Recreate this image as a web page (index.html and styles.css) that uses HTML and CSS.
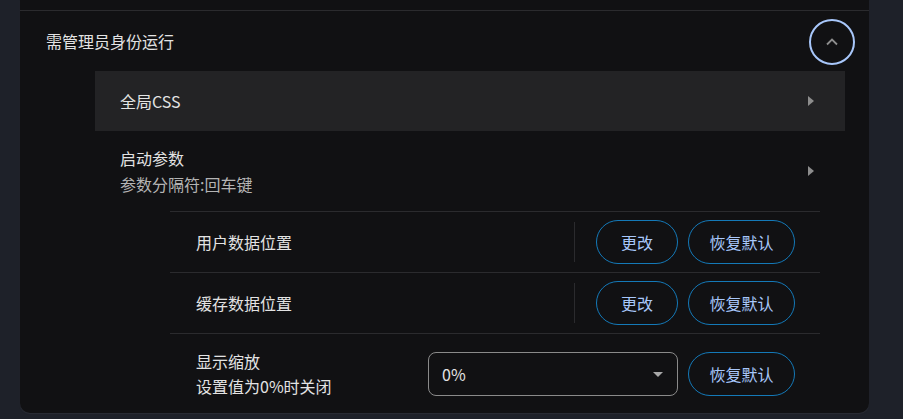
FILE: index.html
```html
<!DOCTYPE html>
<html lang="zh-CN">

<head>
    <meta charset="UTF-8">
    <meta name="viewport" content="width=device-width, initial-scale=1.0">
    <title>设置</title>
    <link rel="stylesheet" href="styles.css">
</head>

<body>
    <div class="page">
        <div class="card">
            <div class="prev-item"></div>

            <!-- 需管理员身份运行 -->
            <div class="header-row">
                <span class="title">需管理员身份运行</span>
                <button class="btn-collapse">
                    <svg width="16" height="16" viewBox="0 0 16 16">
                        <path d="M3 10.5 L8 5.5 L13 10.5" fill="none" stroke="#8e8e8e" stroke-width="1.8" />
                    </svg>
                </button>
            </div>

            <div class="sub">
                <div class="panel panel-active">
                    <span class="title">全局CSS</span>
                    <span class="arrow"></span>
                </div>
                <div class="panel panel-tall">
                    <div class="text-block">
                        <div class="title">启动参数</div>
                        <div class="subtitle">参数分隔符:回车键</div>
                    </div>
                    <span class="arrow"></span>
                </div>
            </div>

            <!-- 数据位置 -->
            <div class="list">
                <div class="list-row">
                    <span class="label">用户数据位置</span>
                    <span class="divider"></span>
                    <button class="btn btn-change">更改</button>
                    <button class="btn btn-reset">恢复默认</button>
                </div>
                <div class="list-row">
                    <span class="label">缓存数据位置</span>
                    <span class="divider"></span>
                    <button class="btn btn-change">更改</button>
                    <button class="btn btn-reset">恢复默认</button>
                </div>
                <div class="list-row list-row-tall">
                    <div class="label">
                        <div>显示缩放</div>
                        <div>设置值为0%时关闭</div>
                    </div>
                    <div class="select">
                        <span>0%</span>
                        <span class="caret"></span>
                    </div>
                    <button class="btn btn-reset">恢复默认</button>
                </div>
            </div>
        </div>
    </div>
</body>

</html>
```

FILE: styles.css
```css
* {
    margin: 0;
    padding: 0;
    box-sizing: border-box;
}

body {
    font-family: "Noto Sans CJK SC", "Noto Sans", sans-serif;
    font-size: 16px;
    background-color: #1e2129;
    color: #e3e3e3;
    overflow: hidden;
}

.page {
    padding: 0 34px 0 20px;
    height: 419px;
}

.card {
    background: #111113;
    border-radius: 0 0 10px 10px;
    box-shadow: 0 1px 1px #2a2d35;
    height: 413px;
    overflow: hidden;
}

.prev-item {
    height: 11px;
    border-bottom: 1px solid #2b2b2e;
}

.header-row {
    display: flex;
    align-items: center;
    justify-content: space-between;
    height: 60px;
    padding: 0 14px 0 26px;
}

.btn-collapse {
    width: 46px;
    height: 46px;
    border-radius: 50%;
    border: 2px solid #a8c7fa;
    background: transparent;
    display: flex;
    align-items: center;
    justify-content: center;
    margin-top: 2px;
}

.sub {
    margin: 0 24px 0 75px;
}

.panel {
    display: flex;
    align-items: center;
    justify-content: space-between;
    height: 60px;
    padding: 0 31px 0 25px;
}

.panel-active {
    background: #232325;
}

.panel-tall {
    height: 80px;
}

.text-block {
    line-height: 26px;
}

.subtitle {
    color: #b4b4b4;
}

.arrow {
    width: 0;
    height: 0;
    border-top: 5px solid transparent;
    border-bottom: 5px solid transparent;
    border-left: 6px solid #8d8d8d;
}

.list {
    margin: 0 49px 0 150px;
}

.list-row {
    display: flex;
    align-items: center;
    height: 61px;
    border-top: 1px solid #2b2b2e;
    padding: 0 25px 0 26px;
}

.list-row-tall {
    height: 81px;
}

.list-row .label {
    flex: 1;
    line-height: 25px;
}

.divider {
    width: 1px;
    height: 40px;
    background: #2b2b2e;
    margin-right: 21px;
}

.btn {
    height: 44px;
    border: 1px solid #1479b8;
    border-radius: 22px;
    background: transparent;
    color: #a8c7fa;
    font-family: inherit;
    font-size: 16px;
    cursor: pointer;
}

.btn-change {
    width: 82px;
    margin-right: 10px;
}

.btn-reset {
    width: 107px;
}

.select {
    display: flex;
    align-items: center;
    justify-content: space-between;
    width: 250px;
    height: 44px;
    border: 1px solid #8a8a8a;
    border-radius: 8px;
    padding: 0 14px 0 13px;
    margin-right: 10px;
    color: #e3e3e3;
}

.caret {
    width: 0;
    height: 0;
    border-left: 5px solid transparent;
    border-right: 5px solid transparent;
    border-top: 5px solid #a8a8a8;
}
```
